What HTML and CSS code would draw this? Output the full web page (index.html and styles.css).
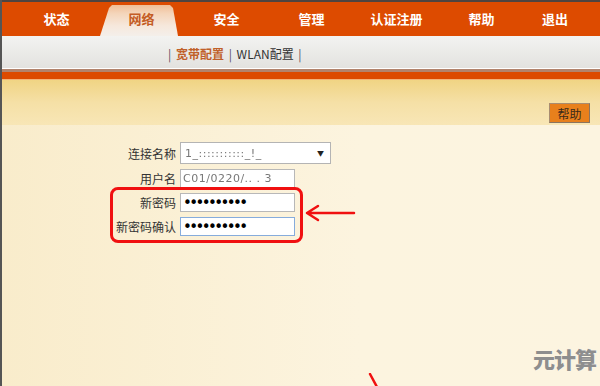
FILE: index.html
```html
<!DOCTYPE html>
<html lang="zh-CN">
<head>
  <meta charset="UTF-8" />
  <meta name="viewport" content="width=device-width, initial-scale=1.0" />
  <title>网络 - 宽带配置</title>
  <link rel="stylesheet" href="styles.css">
</head>
<body>
  <div class="page">
    <ul class="topnav">
      <li>状态</li>
      <li class="active">网络</li>
      <li>安全</li>
      <li>管理</li>
      <li>认证注册</li>
      <li>帮助</li>
      <li class="last">退出</li>
    </ul>

    <div class="subnav">
      <span class="sep">|</span> <span class="cur">宽带配置</span> <span class="sep">|</span> WLAN配置 <span class="sep">|</span>
    </div>

    <div class="rule"></div>

    <div class="banner">
      <button class="help">帮助</button>
    </div>

    <form class="form">
      <label>连接名称</label>
      <div class="select"><span class="blur">1_:::::::::::_!_</span><span class="caret">▼</span></div>
      <label>用户名</label>
      <div class="field"><span class="blur">C01/0220/.. . 3</span></div>
      <label>新密码</label>
      <input class="field pw" type="password" value="1234567890">
      <label>新密码确认</label>
      <input class="field pw focus" type="password" value="1234567890">
    </form>
  </div>

  <!-- red markup drawn over the screenshot -->
  <div class="mark-box"></div>
  <svg class="mark-arrow" width="60" height="24" viewBox="0 0 60 24">
    <path d="M3 12 H50 M3 12 L14 5 M3 12 L14 19" stroke="#f01010" stroke-width="2.5" fill="none" stroke-linecap="round"/>
  </svg>
  <svg class="mark-tail" width="14" height="16" viewBox="0 0 14 16">
    <path d="M2 1 L9 14" stroke="#f01010" stroke-width="2.5" fill="none" stroke-linecap="round"/>
  </svg>

  <div class="watermark">元计算</div>
</body>
</html>
```

FILE: styles.css
```css
* {
  box-sizing: border-box;
  margin: 0;
  padding: 0;
}
body {
  width: 600px;
  height: 386px;
  overflow: hidden;
  background: linear-gradient(90deg, #f9eccb, #fcf4df 60%, #fcf4e0);
  font-family: "Noto Sans CJK SC", "DejaVu Sans", sans-serif;
  color: #333;
  position: relative;
}
.page {
  height: 386px;
  border-left: 2px solid #555;
}
.topnav {
  list-style: none;
  display: flex;
  height: 36px;
  padding-left: 12px;
  background: #dd4b00;
  border-top: 2px solid #4e4440;
}
.topnav li {
  flex: 0 0 85px;
  text-align: center;
  line-height: 34px;
  font-size: 13px;
  font-weight: bold;
  color: #fff;
}
.topnav li.last {
  flex-basis: 62px;
}
.topnav li.active {
  color: #c45c24;
  background: linear-gradient(180deg, #eeb68a 0%, #f4d6bc 35%, #f6e8dc 70%, #f4efea 100%);
  clip-path: polygon(1px 100%, 10px 6px, 13px 3px, 71px 3px, 74px 6px, 79px 100%);
}
.subnav {
  height: 33px;
  padding-left: 164px;
  line-height: 36px;
  font-size: 12px;
  color: #333;
  background: linear-gradient(180deg, #f3f3f1, #e3e2df);
  border-bottom: 1px solid #fff;
}
.subnav .sep {
  color: #5a5060;
  margin: 0 2px;
}
.subnav .cur {
  color: #c0602a;
  font-weight: bold;
}
.rule {
  height: 11px;
  background: #dc4a00;
  border-top: 3px solid #b2836c;
  border-bottom: 1px solid #f2b27a;
}
.banner {
  height: 45px;
  display: flex;
  justify-content: flex-end;
  align-items: flex-end;
  padding: 0 10px 2px 0;
  background: linear-gradient(180deg, #f0d484, #f5e0a6 50%, #f8e6b6);
}
.help {
  width: 41px;
  height: 20px;
  font-family: inherit;
  font-size: 12px;
  color: #3a2a1a;
  background: #e8801c;
  border: 1px solid #a88c70;
  border-right-color: #8a7460;
  border-bottom-color: #8a7460;
}
.form {
  display: grid;
  grid-template-columns: 174px auto;
  column-gap: 4px;
  row-gap: 5px;
  align-items: center;
  padding-top: 17px;
}
.form label {
  text-align: right;
  font-size: 12px;
  color: #333;
}
.select {
  width: 151px;
  height: 22px;
  display: flex;
  align-items: center;
  justify-content: space-between;
  padding: 0 6px 0 4px;
  background: #fff;
  border: 1px solid #b4b4b4;
}
.caret {
  font-size: 7px;
  color: #222;
}
.field {
  width: 115px;
  height: 19px;
  display: flex;
  align-items: center;
  padding: 0 2px;
  background: #fff;
  border: 1px solid #b8b8b8;
  font-family: "DejaVu Sans", sans-serif;
  font-size: 11px;
  color: #111;
  outline: none;
}
.field.pw {
  font-size: 15px;
  letter-spacing: -2.6px;
  color: #000;
}
.field.focus {
  border-color: #86acdc;
}
.blur {
  font-family: "DejaVu Sans", sans-serif;
  font-size: 11px;
  color: #777;
  filter: blur(0.5px);
  letter-spacing: 0.5px;
}
.mark-box {
  position: absolute;
  left: 110px;
  top: 187px;
  width: 193px;
  height: 56px;
  border: 3px solid #f01010;
  border-radius: 8px;
}
.mark-arrow {
  position: absolute;
  left: 304px;
  top: 201px;
}
.mark-tail {
  position: absolute;
  left: 368px;
  top: 373px;
}
.watermark {
  position: absolute;
  right: 4px;
  bottom: 12px;
  font-size: 22px;
  font-weight: 900;
  color: #8e8e8e;
  letter-spacing: -1px;
  text-shadow: 0 0 1px #fff;
}
```
